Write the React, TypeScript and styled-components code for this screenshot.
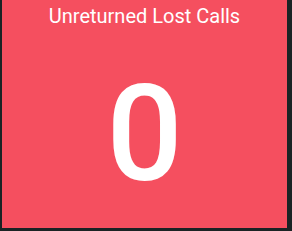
import React from "react";
import styled, { createGlobalStyle } from "styled-components";

const GlobalStyle = createGlobalStyle`
  html, body {
    margin: 0;
    padding: 0;
    background: #1a2324;
  }
`;

const Page = styled.div`
  width: 292px;
  height: 231px;
  padding: 0 5px 3px 2px;
  box-sizing: border-box;
  background: #1a2324;
`;

const Tile = styled.div`
  height: 100%;
  display: flex;
  flex-direction: column;
  align-items: center;
  background: #f54f5f;
  color: #ffffff;
  font-family: Roboto, "Liberation Sans", sans-serif;
`;

const Title = styled.div`
  margin-top: 4px;
  font-size: 20px;
  line-height: 24px;
`;

const Count = styled.div`
  flex: 1;
  display: flex;
  align-items: center;
  justify-content: center;
  padding-top: 14px;
  font-size: 134px;
  font-weight: 500;
  line-height: 1;
`;

export default function App() {
  return (
    <>
      <GlobalStyle />
      <Page>
        <Tile>
          <Title>Unreturned Lost Calls</Title>
          <Count>0</Count>
        </Tile>
      </Page>
    </>
  );
}
